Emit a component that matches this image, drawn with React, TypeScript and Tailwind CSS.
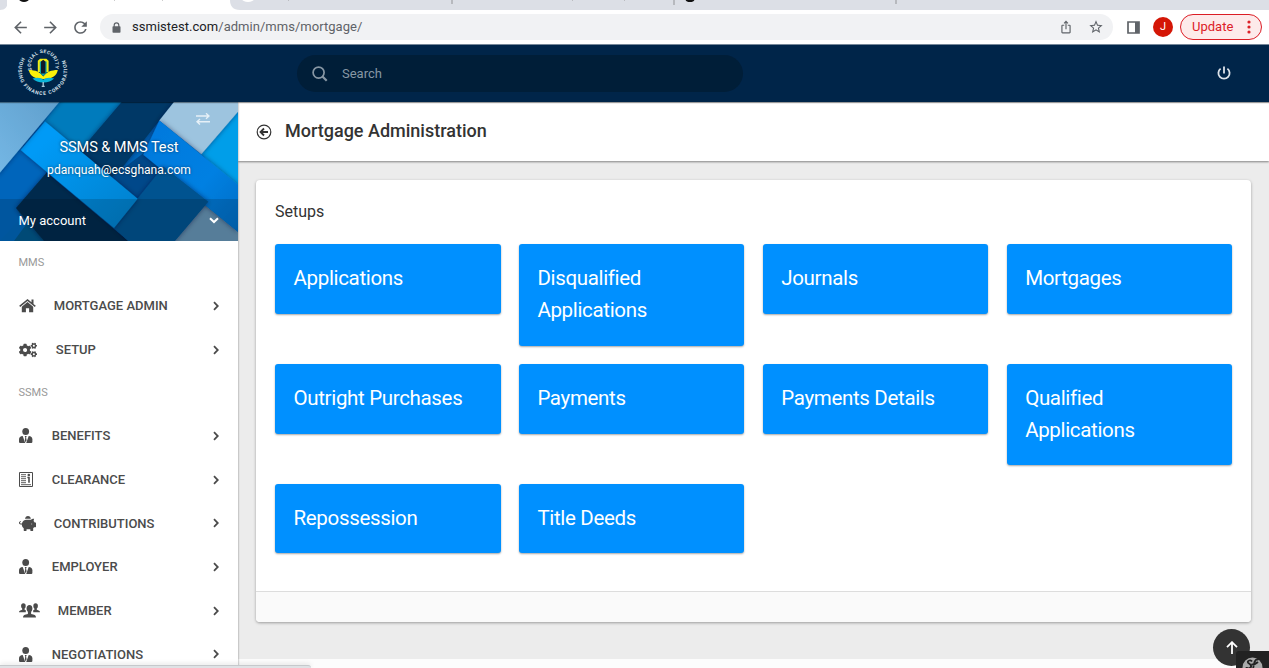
import React from "react";
import { FaCogs, FaPiggyBank } from "react-icons/fa";
import { MdArrowBack, MdArrowForward, MdRefresh, MdStarBorder, MdIosShare } from "react-icons/md";

const cards = [
  "Applications",
  "Disqualified Applications",
  "Journals",
  "Mortgages",
  "Outright Purchases",
  "Payments",
  "Payments Details",
  "Qualified Applications",
  "Repossession",
  "Title Deeds",
];

function HomeIcon() {
  return (
    <svg width="17" height="14" viewBox="0 0 17 14" fill="currentColor">
      <path d="M8.5 0 .2 6.8l1 1.1 7.3-6 7.3 6 1-1.1-2.3-1.9V.6h-2v2.6z" />
      <path d="M8.5 3.1 2.8 7.8V13.3h4.1V9.3h3.2v4h4.1V7.8z" />
    </svg>
  );
}

function UserTieIcon() {
  return (
    <svg width="14" height="15" viewBox="0 0 14 15" fill="currentColor">
      <ellipse cx="6.7" cy="3.5" rx="3.4" ry="3.5" />
      <path d="M3.7 8 6.2 14.9H.8c-.5 0-.8-.3-.8-.8v-2.6C0 9.200 1.400 8 3.700 8z" />
      <path d="M9.700 8 7.200 14.900h5.400c.5 0 .8-.3.800-.8v-2.600c0-2.300-1.400-3.500-3.700-3.500z" />
      <path d="M5.700 8h2l-.6 1.500.5 2.700-.9 2.200-.9-2.200.5-2.700z" />
    </svg>
  );
}

function MagazineIcon() {
  return (
    <svg width="14" height="15" viewBox="0 0 14 15" fill="none" stroke="currentColor">
      <path d="M.5.5h13v14H.5z" />
      <path d="M2 2.700h5M2 4.700h5M2 6.700h5M2 8.700h5M2 10.700h5M2 12.700h10" strokeWidth=".9" />
      <path d="M8.400 5.500h1.600v5.300" strokeWidth="1.600" />
      <circle cx="9.800" cy="3" r="1.300" fill="currentColor" stroke="none" />
    </svg>
  );
}

function GroupIcon() {
  return (
    <svg width="21" height="15" viewBox="0 0 21 15" fill="currentColor">
      <ellipse cx="4.400" cy="3" rx="2.300" ry="2.800" />
      <ellipse cx="16.600" cy="3" rx="2.300" ry="2.800" />
      <path d="M0 9.300c0-1.600 1.300-2 3.200-2.600V5h2.400v1.700l1.200.5v2.100zM21 9.300c0-1.600-1.300-2-3.200-2.600V5h-2.400v1.700l-1.200.5v2.100z" />
      <ellipse cx="10.500" cy="5.600" rx="2.900" ry="3.500" />
      <path d="M4 14.400c0-2.300 1.700-2.900 4.900-3.500V8h3.200v2.900c3.200.6 4.900 1.200 4.900 3.500z" />
    </svg>
  );
}

function Chevron({ down = false }: { down?: boolean }) {
  return down ? (
    <svg width="10" height="7" viewBox="0 0 10 7" fill="none" stroke="currentColor" strokeWidth="2">
      <path d="m1 1.200 4 3.800 4-3.800" />
    </svg>
  ) : (
    <svg width="6" height="10" viewBox="0 0 6 10" fill="none" stroke="currentColor" strokeWidth="1.800">
      <path d="m1 1.200 3.800 3.800L1 8.800" />
    </svg>
  );
}

function NavItem({ icon, label, gap }: { icon: React.ReactNode; label: string; gap: string }) {
  return (
    <div className="flex h-[43.7px] shrink-0 items-center pl-[18.8px] pr-[19.5px] text-[13px] font-medium text-[#4b4b4b]">
      {icon}
      <span className={gap}>{label}</span>
      <span className="ml-auto">
        <Chevron />
      </span>
    </div>
  );
}

function Logo() {
  return (
    <svg className="ml-[17px] mt-[4px]" width="52" height="50" viewBox="0 0 52 50" fontFamily="Roboto, sans-serif" fontWeight="700">
      <defs>
        <path id="inner" d="M15 21.100A12.200 12.200 0 1 1 37.400 21.100" />
        <path id="outer" d="M5 8.400A24.500 24.500 0 1 0 46.400 8.400" />
      </defs>
      <text fontSize="4.900" fill="#d8e2ec">
        <textPath href="#inner" textLength="46">SOCIAL SECURITY</textPath>
      </text>
      <text fontSize="5" fill="#d8e2ec">
        <textPath href="#outer" textLength="101">HOUSING FINANCE CORPORATION</textPath>
      </text>
      <path d="M20.800 23V11.800L23 9.800h6.400l2.200 2V23z" fill="#f2ec13" />
      <path d="M11.800 21c7 0 11 2 14.500 6.500 3.500-4.500 7.500-6.500 14.500-6.500-1 6-6 9-14.500 9s-13.500-3-14.500-9z" fill="#fbf10a" />
      <path d="M15.500 29.500c5-1.300 8.500-.8 10.800 1.300 2.300-2.100 5.800-2.600 10.800-1.300-2.500 2.800-6.300 4-10.800 4s-8.300-1.200-10.800-4z" fill="#0bb4d8" />
      <path d="M22.800 24V12.500h6.800V24l-3.400 3z" fill="#0ca3aa" />
      <path d="M24 24.500v-12l2.200-1.700 2.200 1.700v12z" fill="#111827" />
      <path d="M26.200 33v4.500M24.700 37.300h3" stroke="#a9cadc" strokeWidth="1.300" />
    </svg>
  );
}

function BannerArt() {
  return (
    <svg className="absolute inset-0 h-full w-full" viewBox="0 6 714 418" preserveAspectRatio="none">
      <defs>
        <linearGradient id="sky" x1="0" y1="1" x2="1" y2="0">
          <stop offset="0" stopColor="#75b8e6" />
          <stop offset="1" stopColor="#5f9ecb" />
        </linearGradient>
        <linearGradient id="bright" x1="0" y1="0" x2="1" y2="1">
          <stop offset=".2" stopColor="#009af6" />
          <stop offset="1" stopColor="#007fca" />
        </linearGradient>
        <linearGradient id="stripe" x1="0" y1="0" x2="1" y2="1">
          <stop offset="0" stopColor="#0078dc" />
          <stop offset=".6" stopColor="#0080e2" />
          <stop offset="1" stopColor="#006dc4" />
        </linearGradient>
        <filter id="edge" x="-20%" y="-20%" width="140%" height="140%">
          <feDropShadow dx="0" dy="0" stdDeviation="8" floodColor="#00182e" floodOpacity=".5" />
        </filter>
      </defs>
      <rect y="6" width="714" height="418" fill="#0065b8" />
      <path d="M178 6h187L230 170 125 75z" fill="#007bbc" />
      <path d="M365 6h157L330 250 230 165z" fill="#003866" filter="url(#edge)" />
      <path d="M430 160 560 260 413 300 330 235z" fill="#00488a" />
      <path d="m0 424 0-210 62-64 90 66-110 110 20 30z" fill="#0065bb" />
      <path d="M48 325 150 424H42l38-52z" fill="#00578b" />
      <path d="m140 218 245 206H132L48 325z" fill="#002b4d" filter="url(#edge)" />
      <path d="m604 163 110-128v230z" fill="#009ee9" />
      <path d="M522 6h192v29L604 163 478 62z" fill="#9dc4df" filter="url(#edge)" />
      <path d="m615 316 120 97v20H515z" fill="#6593b4" />
      <path d="m478 62 236 193v142L430 165z" fill="url(#stripe)" filter="url(#edge)" />
      <path d="m490 200 135 106-100 118H385l-43-39z" fill="#005290" filter="url(#edge)" />
      <path d="m135 65 278 232-71 88L62 150z" fill="url(#bright)" filter="url(#edge)" />
      <path d="M-10-6h198L-10 230z" fill="url(#sky)" filter="url(#edge)" />
    </svg>
  );
}

export default function App() {
  return (
    <div className="relative flex h-[668px] w-[1269px] flex-col overflow-hidden bg-[#ececec] font-['Roboto',sans-serif] text-[#333]">
      <div className="relative flex h-[10px] shrink-0 bg-[#dcdfe6]">
        <div className="h-[10px] w-[7px] rounded-br-[6px] bg-[#dcdfe6]" />
        <div className="h-[10px] w-[223px] bg-white" />
        <div className="h-[10px] flex-1 rounded-bl-[7px] bg-[#dcdfe6]" />
        <svg className="absolute inset-0" width="1269" height="10">
          <path d="M0 10h8V0c0 7-3 10-8 10zM230 0v10h10c-7 0-10-4-10-10z" fill="white" />
          <ellipse cx="24" cy="-1" rx="5" ry="3" fill="#111" />
          <ellipse cx="248" cy="-1" rx="6" ry="3" fill="white" />
          <ellipse cx="690" cy="-1" rx="4.500" ry="3" fill="#111" />
          <path d="M114 0h1M162 0h1M288 0h1M572 0h1M624 0h1" stroke="#999" />
          <path d="M452 0v4M674 0v5M896 0v4" stroke="#aeb0b5" strokeWidth="1.600" />
        </svg>
      </div>

      <div className="flex h-[34px] shrink-0 items-center bg-white text-[#5f6368]">
        <MdArrowBack className="ml-[11px]" size={19} />
        <MdArrowForward className="ml-[11px]" size={19} />
        <MdRefresh className="ml-[11px]" size={19} />
        <div className="ml-[10px] flex h-[26px] w-[1013px] items-center rounded-full bg-[#f1f2f4] pl-[12px] pr-[9px]">
          <svg width="9" height="11" viewBox="0 0 9 11" fill="none">
            <path d="M2.200 5V3.200a2.300 2.300 0 0 1 4.600 0V5" stroke="currentColor" strokeWidth="1.200" />
            <rect x=".5" y="4.200" width="8" height="6.600" rx=".8" fill="currentColor" />
          </svg>
          <span className="ml-[11px] text-[13px] tracking-[0.03px] text-[#5f6368]">
            <span className="text-[#202124]">ssmistest.com</span>/admin/mms/mortgage/
          </span>
          <MdIosShare className="ml-auto" size={14} />
          <MdStarBorder className="ml-[15px]" size={16} />
        </div>
        <svg className="ml-[14px]" width="13" height="13" viewBox="0 0 13 13">
          <path d="M1 1h11v11H1z" fill="none" stroke="currentColor" strokeWidth="1.700" />
          <path d="M8 1h4v11H8z" fill="currentColor" />
        </svg>
        <div className="ml-[13px] flex size-[20px] items-center justify-center rounded-full bg-[#d41606] text-[11px] text-white">J</div>
        <div className="ml-[7px] flex h-[26px] w-[82px] items-center rounded-full border border-[#dc1d25] bg-[#fdeaea] pl-[11px] text-[13px] text-[#dc2027]">
          Update
          <svg className="ml-[14px]" width="4" height="14" viewBox="0 0 4 14" fill="currentColor">
            <circle cx="2" cy="2" r="1.600" />
            <circle cx="2" cy="7" r="1.600" />
            <circle cx="2" cy="12" r="1.600" />
          </svg>
        </div>
      </div>

      <header className="z-10 flex h-[58px] shrink-0 border-t border-[#758799] bg-[#002549] shadow-[0_1px_1px_rgba(0,0,0,0.4)]">
        <Logo />
        <div className="ml-[228px] mt-[10px] flex h-[37px] w-[446px] items-center rounded-full bg-[#001e38] pl-[15px] text-[#8797a4]">
          <svg width="16" height="16" viewBox="0 0 16 16" fill="none" stroke="currentColor" strokeWidth="1.700">
            <circle cx="6.600" cy="6.600" r="5.500" />
            <path d="m10.500 10.500 4.200 4.200" strokeWidth="2.200" />
          </svg>
          <span className="ml-[14px] text-[13px]">Search</span>
        </div>
        <svg className="ml-auto mr-[38px] mt-[21px] text-[#dce3e9]" width="14" height="15" viewBox="0 0 14 15" fill="none" stroke="currentColor" strokeWidth="1.800">
          <path d="M7 .5v7M3.600 2.600a5.600 5.600 0 1 0 6.800 0" />
        </svg>
      </header>

      <div className="flex min-h-0 flex-1">
        <aside className="z-[1] flex w-[238px] shrink-0 flex-col overflow-hidden bg-white shadow-[0_0_2px_rgba(0,0,0,0.45)]">
          <div className="relative h-[139px] shrink-0 text-white">
            <BannerArt />
            <div className="relative flex h-full flex-col">
              <svg className="ml-[196px] mt-[11px] text-[#e6f0f7]" width="14" height="12" viewBox="0 0 14 12" fill="none" stroke="currentColor" strokeWidth="1.400">
                <path d="M0 3h13M10 .3l3 2.700-3 2.700M14 8.800H1M4 6.100 1 8.800l3 2.700" />
              </svg>
              <div className="mt-[12px] text-center text-[14.6px] leading-[20px] tracking-[-0.1px] [text-shadow:0_0_3px_#0008]">SSMS &amp; MMS Test</div>
              <div className="mt-[5px] text-center text-[12.1px] leading-[16px] [text-shadow:0_0_3px_#0008]">pdanquah@ecsghana.com</div>
              <div className="mt-auto flex h-[42px] items-center bg-black/15 pl-[18.5px] pr-[19px] pt-[2px] text-[13px]">
                My account
                <span className="-mt-[2px] ml-auto"><Chevron down /></span>
              </div>
            </div>
          </div>
          <div className="flex h-[43px] shrink-0 items-center pl-[18.5px] pt-[2px] text-[11px] text-[#999]">MMS</div>
          <NavItem icon={<HomeIcon />} label="MORTGAGE ADMIN" gap="ml-[18px]" />
          <NavItem icon={<FaCogs size={18} />} label="SETUP" gap="ml-[19px]" />
          <div className="flex h-[42.7px] shrink-0 items-center pl-[18.5px] pt-[2px] text-[11px] text-[#999]">SSMS</div>
          <NavItem icon={<UserTieIcon />} label="BENEFITS" gap="ml-[19px]" />
          <NavItem icon={<MagazineIcon />} label="CLEARANCE" gap="ml-[19px]" />
          <NavItem icon={<FaPiggyBank size={17} />} label="CONTRIBUTIONS" gap="ml-[18px]" />
          <NavItem icon={<UserTieIcon />} label="EMPLOYER" gap="ml-[19px]" />
          <NavItem icon={<GroupIcon />} label="MEMBER" gap="ml-[18px]" />
          <NavItem icon={<UserTieIcon />} label="NEGOTIATIONS" gap="ml-[19px]" />
        </aside>

        <main className="flex flex-1 flex-col">
          <div className="flex h-[59px] shrink-0 items-center bg-white pl-[18px] shadow-[0_1px_2px_rgba(0,0,0,0.45)]">
            <svg width="16" height="16" viewBox="0 0 16 16" fill="none" stroke="currentColor" strokeWidth="1.200">
              <circle cx="8" cy="8" r="6.800" />
              <path d="M12 8H5M8 4.500 4.500 8 8 11.500" strokeWidth="1.800" />
            </svg>
            <h1 className="-mt-[3px] ml-[13px] text-[18px] font-medium">Mortgage Administration</h1>
          </div>

          <section className="ml-[18px] mt-[19px] flex h-[442px] w-[994.5px] shrink-0 flex-col rounded-[4px] bg-white shadow-[0_1px_3px_rgba(0,0,0,0.35)]">
            <h2 className="ml-[19px] mt-[20px] text-[16px] leading-[24px]">Setups</h2>
            <div className="ml-[19px] mr-[18.3px] mt-[20.3px] grid grid-cols-4 items-start gap-x-[18.3px] gap-y-[18.4px]">
              {cards.map((name) => (
                <div key={name} className="rounded-[3px] bg-[#0090ff] pb-[18.6px] pl-[18.5px] pr-[18px] pt-[19.2px] text-[20.5px] leading-[31.8px] tracking-[-0.33px] text-white shadow-[0_1px_2px_rgba(0,0,0,0.35)]">
                  {name}
                </div>
              ))}
            </div>
            <div className="mt-auto h-[31px] rounded-b-[4px] border-t border-[#ddd] bg-[#fafafa]" />
          </section>
          <div className="mt-auto h-[9px] bg-[#fcfcfc]" />
        </main>
      </div>

      <div className="absolute bottom-0 left-0 z-20 h-[3px] w-[311px] rounded-tr-[4px] border-t border-[#c6c9cc] bg-[#dfe2e5] shadow-[0_-1px_5px_rgba(0,0,0,0.13)]" />
      <div className="absolute left-[1213px] top-[629px] z-20 flex size-[37px] items-center justify-center rounded-full bg-[#333] text-white">
        <svg width="12" height="14" viewBox="0 0 12 14" fill="none" stroke="currentColor" strokeWidth="1.800">
          <path d="M6 13V1.500M1 6.200l5-5 5 5" />
        </svg>
      </div>
      <svg className="absolute left-[1236px] top-[651px] z-30" width="33" height="17" viewBox="0 0 33 17">
        <path d="M0 17V3q0-3 3-3h30v17z" fill="#222" />
        <circle cx="16.500" cy="16.500" r="10" fill="#aaa" />
        <path d="M16 10.500c-1-2-5-1-4 1 .8 1.500 4 2 3 4.500-1 2-4.500 1.500-4.500 0M22.500 9c-2-2-4 1-4.500 4l-1 5M15.500 13.500c3 0 5-1 6.500-2.500" fill="none" stroke="#222" strokeWidth="1.800" />
      </svg>
    </div>
  );
}
